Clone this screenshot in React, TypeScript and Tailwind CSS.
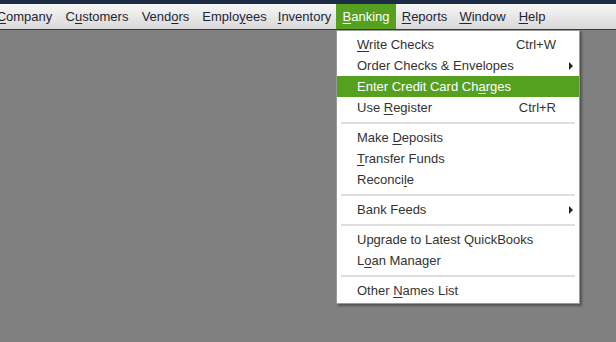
import { ReactNode } from "react"

function Mn({ text, at }: { text: string; at?: number }): ReactNode {
  if (at === undefined || at < 0) return <>{text}</>
  return (
    <>
      {text.slice(0, at)}
      <span className="underline underline-offset-2">{text[at]}</span>
      {text.slice(at + 1)}
    </>
  )
}

const menus = [
  { label: "Company", u: 0, w: "w-[69px] ml-[-10px]" },
  { label: "Customers", u: 1, w: "w-[76px]" },
  { label: "Vendors", u: 4, w: "w-[61px]" },
  { label: "Employees", u: 5, w: "w-[77px]" },
  { label: "Inventory", u: 0, w: "w-[63px]" },
  { label: "Banking", u: 0, w: "w-[60px]", active: true },
  { label: "Reports", u: 0, w: "w-[57px]" },
  { label: "Window", u: 0, w: "w-[59px]" },
  { label: "Help", u: 0, w: "w-[40px]" },
]

type Entry =
  | { sep: true }
  | { sep?: false; label: string; u?: number; key?: string; sub?: boolean; hot?: boolean }

const bankingItems: Entry[] = [
  { label: "Write Checks", u: 0, key: "Ctrl+W" },
  { label: "Order Checks & Envelopes", sub: true },
  { label: "Enter Credit Card Charges", u: 20, hot: true },
  { label: "Use Register", u: 4, key: "Ctrl+R" },
  { sep: true },
  { label: "Make Deposits", u: 5 },
  { label: "Transfer Funds", u: 0 },
  { label: "Reconcile", u: 7 },
  { sep: true },
  { label: "Bank Feeds", sub: true },
  { sep: true },
  { label: "Upgrade to Latest QuickBooks" },
  { label: "Loan Manager", u: 1 },
  { sep: true },
  { label: "Other Names List", u: 6 },
]

export default function App() {
  return (
    <div className="relative w-[616px] h-[342px] overflow-hidden bg-[#808080] font-['Liberation_Sans',Arial,sans-serif] text-[13px]">
      <div className="h-[4px] bg-[#1c2c46]" />
      <div className="flex h-[26px] items-stretch border-b border-[#3a3a3a] bg-gradient-to-b from-[#f7f7f7] to-[#d9d9d9]">
        {menus.map((m) => (
          <div
            key={m.label}
            className={
              "flex shrink-0 items-center justify-center whitespace-nowrap " +
              m.w +
              " " +
              (m.active ? "bg-[#55a01f] text-white" : "text-[#1e2633]")
            }
          >
            <span>
              <Mn text={m.label} at={m.u} />
            </span>
          </div>
        ))}
      </div>

      {/* Banking dropdown */}
      <div className="absolute left-[336px] top-[30px] w-[244px] border border-[#9a9a9a] bg-white pt-[3px] pb-[2px] shadow-[2px_2px_2px_rgba(0,0,0,0.35)]">
        {bankingItems.map((it, i) =>
          it.sep ? (
            <div key={i} className="flex h-[9px] items-center px-[4px]">
              <div className="h-[2px] w-full bg-[#dedede]" />
            </div>
          ) : (
            <div
              key={i}
              className={
                "flex h-[21px] items-center pl-[20px] pr-[7px] " +
                (it.hot ? "bg-[#55a01f] text-white" : "text-[#333333]")
              }
            >
              <span className="flex-1">
                <Mn text={it.label} at={it.u} />
              </span>
              {it.key && <span className="mr-[16px]">{it.key}</span>}
              {it.sub && (
                <svg width="5" height="8" viewBox="0 0 5 8" className="mr-[-2px]">
                  <path d="M0 0 L4 4 L0 8 Z" fill="#222" />
                </svg>
              )}
            </div>
          )
        )}
      </div>
    </div>
  )
}
